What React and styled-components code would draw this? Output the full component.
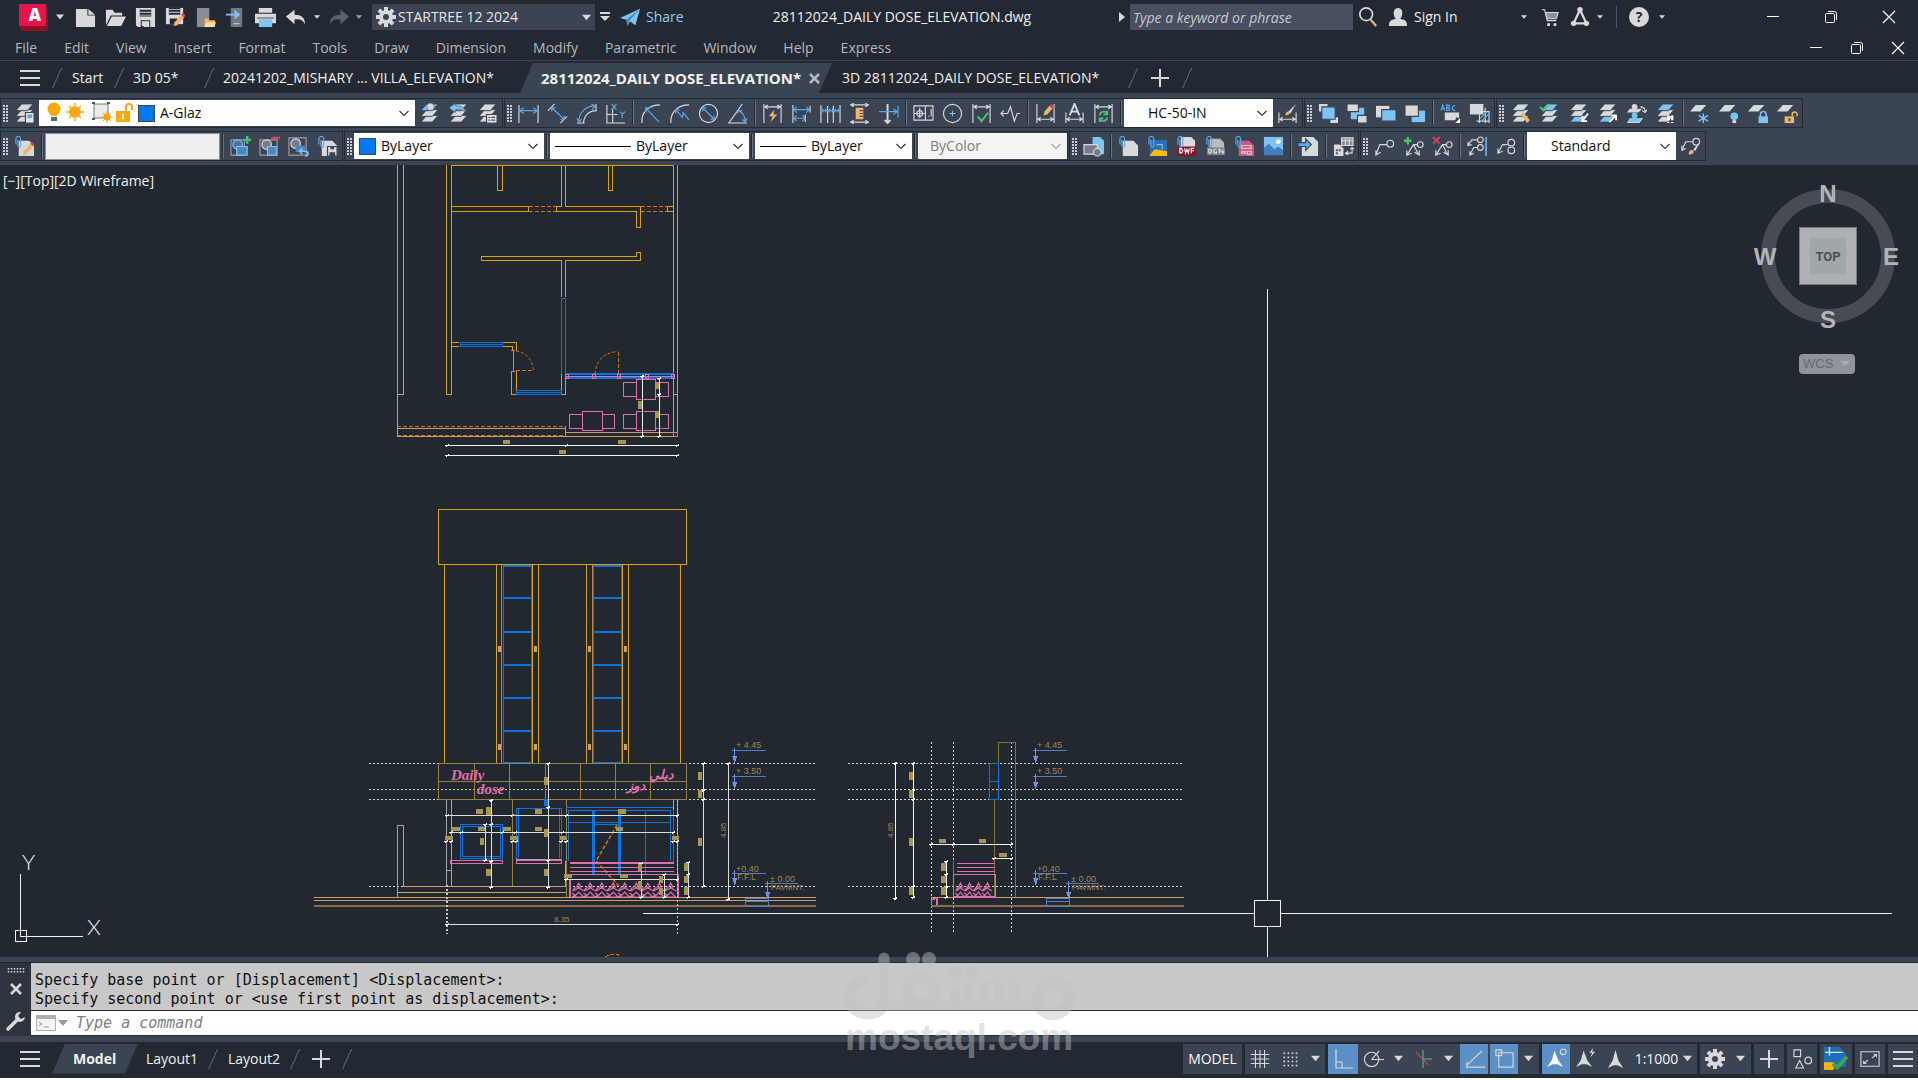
import styled, { createGlobalStyle } from "styled-components";

const INK = "#d9d9d9";
const SKY = "#7cc4f5";
const BLUE = "#5aa9ec";
const AMBER = "#fdb813";
const PEACH = "#f0b36c";
const GREEN = "#4bc46f";
const RED = "#e0405a";

const GlobalStyle = createGlobalStyle`
  * {
    box-sizing: border-box;
  }
  body {
    margin: 0;
    background: #ffffff;
    font-family: "Open Sans", "Noto Sans", sans-serif;
    font-size: 14px;
    line-height: 20px;
    color: #e8e8e8;
  }
  button, input, select {
    font: inherit;
    color: inherit;
    border: 0;
    padding: 0;
    margin: 0;
    background: transparent;
    border-radius: 0;
    outline: 0;
  }
`;

const Shell = styled.div`
  display: flex;
  flex-direction: column;
  height: 100vh;
  padding-bottom: 2px;
  overflow: hidden;
`;

const TitleBar = styled.header`
  display: flex;
  align-items: center;
  height: 34px;
  background: #222933;
`;

const Cell = styled.button`
  display: flex;
  align-items: center;
  justify-content: center;
  flex: none;
  width: ${(p) => p.$w || 30}px;
  height: 30px;
`;

const LogoButton = styled(Cell)`
  margin-left: 18px;
  width: 32px;
`;

const BurgerButton = styled(Cell)`
  width: 44px;
  margin-left: 8px;
`;

const Workspace = styled.label`
  display: flex;
  align-items: center;
  width: 223px;
  height: 26px;
  margin: 0 0 0 8px;
  padding: 0 4px;
  gap: 2px;
  background: #3b4453;
`;

const PlainSelect = styled.select`
  flex: 1;
  min-width: 0;
  height: 100%;
  appearance: none;
`;

const LinkButton = styled.button`
  display: flex;
  align-items: center;
  gap: 6px;
  width: ${(p) => p.$w || 70}px;
  padding-left: 5px;
  color: ${(p) => p.$color || "#f0f0f0"};
`;

const FileTitle = styled.h1`
  flex: 1;
  margin: 0;
  font-size: 14px;
  font-weight: 400;
  text-align: center;
  white-space: nowrap;
  color: #f0f0f0;
`;

const SearchBox = styled.input`
  width: 223px;
  height: 26px;
  margin-left: 5px;
  padding: 0 3px;
  background: #474f61;
  &::placeholder {
    color: #c6c9ce;
    font-style: italic;
    opacity: 1;
  }
`;

const Rule = styled.span`
  width: 1px;
  height: 22px;
  margin: 0 9px;
  background: #4a5467;
`;

const WindowButtons = styled.div`
  display: flex;
  margin-left: ${(p) => p.$gap || "auto"};
`;

const MenuBar = styled.nav`
  display: flex;
  align-items: center;
  height: 27px;
  padding: 2px 0 0 15px;
  gap: 27px;
  border-bottom: 1px solid #3b4453;
  background: #222933;
`;

const MenuItem = styled.button`
  color: #b4b7bb;
`;

const TabStrip = styled.div`
  display: flex;
  align-items: center;
  height: 32px;
  padding-top: 2px;
  background: #222933;
`;

const Tab = styled.button`
  height: 30px;
  width: ${(p) => p.$w}px;
  padding-left: ${(p) => p.$pad || 11}px;
  text-align: left;
  white-space: nowrap;
  color: #f0f0f0;
`;

const ActiveTab = styled(Tab)`
  display: flex;
  align-items: center;
  gap: 8px;
  font-size: ${(p) => p.$size || 14}px;
  font-weight: 700;
  background: #3b4453;
  clip-path: polygon(13px 0, 100% 0, calc(100% - 13px) 100%, 0 100%);
`;

const Slash = styled.span`
  flex: none;
  width: 10px;
  height: 20px;
  background: linear-gradient(114deg, transparent 46%, #4a5467 47%, #4a5467 54%, transparent 55%);
`;

const Toolbars = styled.div`
  display: flex;
  flex-direction: column;
  gap: 3px;
  padding: 5px 0 4px;
  background: #3b4453;
`;

const ToolRow = styled.div`
  display: flex;
  gap: 1px;
`;

const Group = styled.div`
  display: flex;
  align-items: center;
  height: 30px;
  border: 1px solid #222933;
`;

const Grip = styled.span`
  width: 5px;
  height: 17px;
  margin: 0 2px;
  background: radial-gradient(circle at 1px 1px, #c8ccd2 0 1px, transparent 1px) 0 0 / 3px 3px;
`;

const Tool = styled.button`
  display: flex;
  align-items: center;
  justify-content: center;
  width: 29px;
  height: 28px;
`;

const Divider = styled.span`
  width: 2px;
  height: 24px;
  margin: 0 2px;
  background: #222933;
  border-right: 1px solid #6d7582;
`;

const Combo = styled.label`
  display: flex;
  align-items: center;
  gap: 5px;
  width: ${(p) => p.$w}px;
  height: ${(p) => p.$h || 26}px;
  padding: 0 6px 0 ${(p) => p.$pad || 5}px;
  background: ${(p) => (p.$off ? "#f4f4f4" : "#ffffff")};
  color: ${(p) => (p.$off ? "#7d7d7d" : "#101010")};
`;

const Swatch = styled.span`
  width: 17px;
  height: 17px;
  background: #0078f0;
  border: 1px solid #445;
`;

const LineSample = styled.span`
  width: ${(p) => p.$w}px;
  height: 1px;
  background: #000000;
`;

const StyleName = styled.input`
  width: 175px;
  height: 27px;
  background: #efefef;
  border: 1px solid #8b919b;
`;

const Viewport = styled.main`
  position: relative;
  flex: 1;
  min-height: 0;
  overflow: hidden;
  background: #222830;
`;

const Drawing = styled.svg`
  display: block;
`;

const ViewLabel = styled.div`
  position: absolute;
  left: 3px;
  top: 6px;
  color: #f0f0f0;
`;

const Cube = styled.svg`
  position: absolute;
  right: 18px;
  top: 14px;
`;

const CommandDock = styled.section`
  position: relative;
  display: flex;
  height: 85px;
  padding: 5px 0 6px;
  background: #3b4453;
`;

const DockSide = styled.div`
  display: flex;
  flex-direction: column;
  align-items: center;
  gap: 6px;
  width: 31px;
  padding-top: 5px;
  background: #2d3440;
  border-top: 1px solid #222933;
  > button:last-child {
    margin-top: 5px;
  }
`;

const DockMain = styled.div`
  flex: 1;
  display: flex;
  flex-direction: column;
  border: 1px solid #222933;
  border-width: 1px 0;
  font-family: "DejaVu Sans Mono", monospace;
  font-size: 15px;
`;

const History = styled.div`
  height: 48px;
  padding: 8px 4px 0;
  background: #c8c8c8;
  color: #101010;
  line-height: 19px;
  border-bottom: 1px solid #222933;
  > p {
    margin: 0;
  }
`;

const Prompt = styled.label`
  flex: 1;
  display: flex;
  align-items: center;
  gap: 2px;
  padding-left: 5px;
  background: #ffffff;
  > input {
    flex: 1;
    padding-left: 6px;
    color: #222;
  }
  > input::placeholder {
    color: #7b807f;
    font-style: italic;
    opacity: 1;
  }
`;

const Watermark = styled.svg`
  position: absolute;
  left: 44%;
  top: -5px;
  z-index: 2;
  opacity: 0.45;
  pointer-events: none;
`;

const StatusBar = styled.footer`
  display: flex;
  align-items: center;
  height: 36px;
  padding-bottom: 3px;
  background: #222933;
`;

const StatusGroup = styled.div`
  display: flex;
  height: 30px;
  margin-right: 3px;
  background: #3b4453;
  &:last-child {
    margin-right: 0;
  }
`;

const StatusButton = styled.button`
  display: flex;
  align-items: center;
  justify-content: center;
  gap: 5px;
  width: ${(p) => p.$w || 30}px;
  height: 30px;
  margin-right: ${(p) => p.$mr || 0}px;
  background: ${(p) => (p.$on ? "#5b8fc7" : "transparent")};
  color: #f5f5f5;
`;

const Push = styled.span`
  margin-left: auto;
`;

const Svg = ({ size = 22, children }) => (
  <svg width={size} height={size} viewBox="0 0 22 22" fill="none" stroke={INK} strokeWidth="1.2">
    {children}
  </svg>
);

const Caret = ({ c = INK, w = 8 }) => (
  <svg width={w} height={w} viewBox="0 0 10 10">
    <path d="M0 2h10L5 8z" fill={c} />
  </svg>
);

const Chevron = ({ c = "#333" }) => (
  <svg width="10" height="10" viewBox="0 0 10 10" fill="none" stroke={c} strokeWidth="1.1">
    <path d="M0.5 3L5 7.500L9.500 3" />
  </svg>
);

const Burger = () => (
  <svg width="20" height="18" viewBox="0 0 20 18" fill={INK}>
    <path d="M0 1h20v2H0zM0 8h20v2H0zM0 15h20v2H0z" />
  </svg>
);

const Plus = () => (
  <svg width="18" height="18" viewBox="0 0 18 18" fill={INK}>
    <path d="M8 0h2v8h8v2h-8v8H8v-8H0V8h8z" />
  </svg>
);

const Gear = ({ size = 20 }) => (
  <svg width={size} height={size} viewBox="0 0 20 20">
    <g fill={INK}>
      {[0, 45, 90, 135].map((a) => (
        <rect key={a} x="8" y="0" width="4" height="20" transform={`rotate(${a} 10 10)`} />
      ))}
      <circle cx="10" cy="10" r="7" />
    </g>
    <circle cx="10" cy="10" r="3" fill="#3b4453" />
  </svg>
);

// three stacked sheets, tops lets a tool tint single layers
const Stack = ({ tops = [INK, INK, INK] }) => (
  <g stroke="none">
    {[13, 7, 1].map((y, i) => (
      <path key={y} d={`M8 ${y}h12l-6 7H2z`} fill={tops[2 - i]} stroke="#3b4453" strokeWidth="1" />
    ))}
  </g>
);

const Clip = () => <path d="M2 9V3a2.500 2.500 0 0 1 5 0v7a1.500 1.500 0 0 1-3 0V4" stroke={BLUE} />;
const Page = ({ c = INK }) => <path d="M5 5h11l5 5v11H5z" fill={c} stroke="none" />;
const Sheet = ({ x = 0, c = INK }) => <path d={`M${x} 9L${x + 6} 2h11l-6 7z`} fill={c} stroke="none" />;
const Pencil = () => (
  <g stroke="none">
    <path d="M10 16l7-8 3 3-7 8-4 1z" fill={PEACH} />
    <path d="M17 8l1.500-2 3 3L20 11z" fill={RED} />
  </g>
);
const Brush = () => (
  <g stroke="none">
    <path d="M9 19c0-4 3-5 5-4 1 3-1 5-5 4z" fill={PEACH} />
    <path d="M14 14l7-8-5 10z" fill={INK} />
  </g>
);
const DimBar = ({ y = 4 }) => <path d={`M2 1v20M20 1v20M3 ${y}h16M6 ${y - 2}l-3 2 3 2M16 ${y - 2}l3 2-3 2`} />;

const icons = {
  newFile: <path d="M1 2h12v7h8v12H1zM14 2l7 6h-7z" fill={INK} stroke="none" />,
  open: <path d="M1 19V3h7l2 3h8v3H6zM2 20L7 10h15l-5 10z" fill={INK} stroke="none" />,
  save: (
    <g stroke="none">
      <path d="M1 1h20v20H3l-2-2z" fill={INK} />
      <path d="M5 1h12v9H5zM6 14h10v7H6z" fill="#222933" />
      <path d="M5 1h12v2H5zM5 5h12v1H5zM5 8h12v1H5zM7 15h2v5H7zM9 15h6v6H9z" fill={INK} />
    </g>
  ),
  saveAs: (
    <g stroke="none">
      <path d="M1 1h18v17H1z" fill={INK} />
      <path d="M4 1h12v7H4zM5 12h8v6H5z" fill="#222933" />
      <path d="M4 2h12v1H4zM4 5h12v1H4z" fill={INK} />
      <Pencil />
    </g>
  ),
  openMobile: (
    <g stroke="none">
      <path d="M2 1h13v20H2z" fill="#8a8d92" />
      <path d="M10 12h4l1 2h6v7H10z" fill={PEACH} />
      <path d="M12 16h10l-2 5H10z" fill="#ffdca8" />
    </g>
  ),
  saveMobile: (
    <g stroke="none">
      <path d="M6 1h12v20H6z" fill="#74777d" />
      <path d="M1 7h9V3l6 5-6 5V9H1z" fill={SKY} />
      <path d="M9 17h6v1H9z" fill={INK} />
    </g>
  ),
  print: (
    <g stroke="none">
      <path d="M4 1h14v5H4zM0 7h22v10H0z" fill={INK} />
      <path d="M4 13h14v8H4z" fill={SKY} />
      <path d="M2 11h18v1H2z" fill="#444b57" />
    </g>
  ),
  undo: <path d="M10 3v5c7 0 11 3 11 10-2-4-5-6-11-5v5L1 10z" fill={INK} stroke="none" />,
  redo: <path d="M12 3v5C5 8 1 11 1 18c2-4 5-6 11-5v5l9-8z" fill="#5c616a" stroke="none" />,
  plane: (
    <g stroke="none">
      <path d="M0 12L22 2l-5 18-6-4-3 5-1-7z" fill={SKY} />
      <path d="M7 14L22 2 10 15l-2 6z" fill="#3b86c4" />
    </g>
  ),
  search: (
    <>
      <circle cx="9" cy="8" r="7" strokeWidth="1.800" />
      <path d="M14 14l6 7" stroke={PEACH} strokeWidth="2.500" />
    </>
  ),
  person: <path d="M11 1c7 0 5 11 2 12 4 1 8 1 8 8H1c0-7 4-7 8-8C6 12 4 1 11 1z" fill={INK} stroke="none" />,
  cart: (
    <>
      <path d="M2 3h3l3 12h10" />
      <path d="M6 6h14l-2 7H8z" fill="#8d9198" />
      <path d="M8 18h3v3H8zM15 18h3v3h-3z" fill={INK} stroke="none" />
    </>
  ),
  app: (
    <>
      <path d="M11 3L4 18h14z" strokeWidth="2.500" strokeLinejoin="round" />
      <g fill={INK} stroke="none">
        <circle cx="11" cy="3" r="3" />
        <circle cx="4" cy="18" r="3" />
        <circle cx="18" cy="18" r="3" />
      </g>
    </>
  ),
  layerProps: (
    <>
      <Stack />
      <path d="M12 10h9v11h-9z" fill="#e8e8e8" stroke="#3b4453" />
      <path d="M14 12h5v4h-5z" fill={BLUE} stroke="none" />
    </>
  ),
  makeCurrent: (
    <>
      <Stack tops={[SKY, INK, INK]} />
      <circle cx="12" cy="4" r="4" fill={INK} stroke="#3b4453" strokeWidth="0.600" />
    </>
  ),
  layerPrev: (
    <>
      <Stack />
      <path d="M8 0v3c7 0 10 2 10 7-3-4-6-4-10-3v3L1 5z" fill={SKY} stroke="#3b4453" strokeWidth="0.600" />
    </>
  ),
  layerStates: (
    <>
      <Stack />
      <path d="M10 12h11v9H10z" fill="#e8e8e8" stroke="#3b4453" />
      <path d="M12 15h2m1 0h4M12 18h2m1 0h4" stroke="#444" />
    </>
  ),
  linear: (
    <>
      <path d="M1 2v19M21 2v19" />
      <path d="M2 8h18M6 5L2 8l4 3M16 5l4 3-4 3" stroke={BLUE} />
    </>
  ),
  aligned: (
    <>
      <path d="M1 8L8 1M14 21l7-7" />
      <path d="M5 5l13 12M5 9V5h4M18 13v4h-4" stroke={BLUE} />
    </>
  ),
  arcLen: (
    <>
      <path d="M8 21C8 14 13 8 21 8M1 21h8M21 1v8" />
      <path d="M3 20C3 10 10 3 20 3M16 1l4 2-3 4M1 16l2 4 3-3" stroke={BLUE} />
    </>
  ),
  ordinate: (
    <>
      <path d="M2 2v19h19M2 12h11M8 6v15" />
      <path d="M7 1l5 6M12 1L7 7M16 9l2 3 3-3M18 12v4" stroke={BLUE} />
    </>
  ),
  radius: (
    <>
      <path d="M2 21C1 10 9 2 21 2" />
      <path d="M6 5l14 15M6 10V5h5" stroke={BLUE} />
    </>
  ),
  jogged: (
    <>
      <path d="M2 21C1 10 9 2 21 2" />
      <path d="M7 7l7 8 1-5 6 8M7 11V7h4" stroke={BLUE} />
    </>
  ),
  diameter: (
    <>
      <circle cx="11" cy="11" r="9.500" />
      <path d="M5 5l12 12M5 9V5h4M17 13v4h-4" stroke={BLUE} />
    </>
  ),
  angular: (
    <>
      <path d="M16 1L2 21h19" />
      <path d="M12 8c5 2 7 7 7 12M11 11l1-3 4 0M16 17l3 3 2-4" stroke={BLUE} />
    </>
  ),
  quickDim: (
    <>
      <DimBar />
      <path d="M13 7l-6 7h4l-2 6 7-8h-4z" fill={PEACH} stroke="none" />
    </>
  ),
  baseline: (
    <>
      <path d="M2 2v19M20 3v7M15 12v8" />
      <path d="M3 7h17M3 16h12M6 4L3 7l3 3M16 4l3 3-3 3M6 13l-3 3 3 3M12 13l3 3-3 3" stroke={BLUE} />
    </>
  ),
  continueDim: (
    <>
      <path d="M1 2v19M8 3v18M14 3v18M21 2v19" />
      <path d="M1 8h20M3 6v4M6 6v4M10 6v4M13 6v4M16 6v4M19 6v4" stroke={BLUE} />
    </>
  ),
  space: (
    <>
      <path d="M1 2h20M1 20h20M5 0L2 2l3 2M17 0l3 2-3 2M5 18l-3 2 3 2M17 18l3 2-3 2" />
      <path d="M7 5h8v12H7z" fill={PEACH} stroke="none" />
      <path d="M11 8h4M11 11h4M11 14h4" stroke="#555" />
    </>
  ),
  breakDim: (
    <>
      <path d="M10 1v20M7 18l3 3 3-3" strokeWidth="2" />
      <path d="M1 9h19M16 6l4 3-4 3M21 3v12" stroke={BLUE} />
    </>
  ),
  tolerance: (
    <>
      <path d="M1 3h20v15H1zM13 3v15M1 11h12M7 5v11M16 14h1M19 6v8" />
      <circle cx="7" cy="11" r="3" />
    </>
  ),
  center: (
    <>
      <circle cx="11" cy="11" r="9.500" />
      <path d="M11 8v6M8 11h6" stroke={SKY} />
    </>
  ),
  inspect: (
    <>
      <DimBar />
      <path d="M7 14l4 5 7-9" stroke={GREEN} strokeWidth="2" />
    </>
  ),
  jogLine: <path d="M1 11h7l3-7 4 15 3-8h3M4 8l-3 3 3 3" />,
  dimEdit: (
    <>
      <DimBar y={17} />
      <path d="M9 13l1-4 6-7 3 3-6 7z" fill={PEACH} stroke="none" />
      <path d="M15 3l2-2 3 3-2 2z" fill={RED} stroke="none" />
    </>
  ),
  dimText: (
    <>
      <path d="M2 10v11M20 10v11M3 17h16M6 15l-3 2 3 2M16 15l3 2-3 2" />
      <path d="M6 13l5-12 5 12M8 9h6" strokeWidth="2" />
    </>
  ),
  dimUpdate: (
    <>
      <DimBar />
      <path d="M7 13c1-5 7-5 8-1M15 15c-1 5-7 5-8 1M15 8v4h-4M7 20v-4h4" stroke={GREEN} strokeWidth="1.800" />
    </>
  ),
  dimStyle: (
    <>
      <path d="M2 10v11M20 10v11M3 17h16M6 15l-3 2 3 2M16 15l3 2-3 2" />
      <path d="M9 13c0-4 2-4 4-4 1 3-1 4-4 4z" fill={PEACH} stroke="none" />
      <path d="M12 9l8-8-6 10z" fill={INK} stroke="none" />
    </>
  ),
  front: (
    <g stroke="none">
      <path d="M1 1h9v8H1zM13 15h8v6h-8z" fill={INK} />
      <path d="M4 4h14v13H4z" fill={SKY} stroke="#3b4453" />
    </g>
  ),
  back: (
    <g stroke="none">
      <path d="M4 5h14v12H4z" fill={SKY} />
      <path d="M0 1h12v8H0zM11 13h10v8H11z" fill={INK} stroke="#3b4453" />
    </g>
  ),
  above: (
    <g stroke="none">
      <path d="M0 3h14v12H0z" fill={INK} />
      <path d="M6 7h15v12H6z" fill={SKY} stroke="#3b4453" />
    </g>
  ),
  under: (
    <g stroke="none">
      <path d="M7 8h14v12H7z" fill={SKY} />
      <path d="M0 2h14v12H0z" fill={INK} stroke="#3b4453" />
    </g>
  ),
  textFront: (
    <>
      <path d="M1 8l2-6 2 6M2 6h3M7 8V2c5 0 3 3 0 3 5 0 4 3 0 3M16 3c-4-1-4 5 0 5" stroke={BLUE} />
      <path d="M5 10h15v6l-3-1-1 3H5z" fill={INK} stroke="none" />
      <path d="M21 21v-5l-5 5z" fill="#fff" stroke="none" />
    </>
  ),
  hatchBack: (
    <>
      <path d="M11 21V9h10v12M8 19h13M17 5v16" />
      <path d="M12 16l7-7M12 20l9-9" stroke={BLUE} />
      <path d="M1 1h14v11H1z" fill={INK} stroke="none" />
    </>
  ),
  layerMatch: (
    <>
      <Stack />
      <path d="M11 12l3-2 7 8-3 3z" fill={PEACH} stroke="none" />
    </>
  ),
  layerCheck: (
    <>
      <Stack tops={[SKY, INK, INK]} />
      <path d="M1 4l4 4 5-7" stroke={GREEN} strokeWidth="2" />
    </>
  ),
  layerDown: (
    <>
      <Stack tops={[INK, INK, SKY]} />
      <path d="M21 11l-6 8M15 14v5h5" strokeWidth="1.800" stroke="#fff" />
    </>
  ),
  layerUp: (
    <>
      <Stack tops={[INK, INK, SKY]} />
      <path d="M13 20l7-7M15 13h5v5" strokeWidth="1.800" stroke="#fff" />
    </>
  ),
  layerUser: (
    <g stroke="none">
      <path d="M4 6h13l-4 4H1zM4 16h14l-4 5H1z" fill={INK} />
      <circle cx="9" cy="4" r="3" fill={INK} />
      <circle cx="9" cy="13" r="3" fill={SKY} />
      <path d="M5 16h12l-4 4H2z" fill={SKY} />
      <path d="M15 4c4 0 5 2 5 5M17 8l3 2 2-3" fill="none" stroke={INK} />
    </g>
  ),
  layerWalk: (
    <>
      <Stack tops={[SKY, INK, INK]} />
      <path d="M14 13v5M18 13v5M14 20v1M18 20v1" stroke="#fff" strokeWidth="2.500" />
    </>
  ),
  freeze: (
    <>
      <Sheet />
      <path d="M14 11v10M9 13l10 6M19 13L9 19" stroke={SKY} strokeWidth="1.500" />
    </>
  ),
  layerOff: (
    <>
      <Sheet />
      <circle cx="16" cy="14" r="4" fill={SKY} stroke="none" />
      <path d="M14 18h4v3h-4z" fill={INK} stroke="none" />
    </>
  ),
  lock: (
    <>
      <Sheet />
      <path d="M13 15v-3a3 3 0 0 1 6 0v3" stroke={SKY} strokeWidth="1.600" />
      <path d="M11 14h10v7H11z" fill={SKY} stroke="none" />
    </>
  ),
  unlock: (
    <>
      <Sheet />
      <path d="M16 14v-2a2.500 2.500 0 0 1 5 0v2" stroke={PEACH} strokeWidth="1.600" />
      <path d="M8 14h10v7H8z" fill={PEACH} stroke="none" />
      <path d="M12 16h2v3h-2z" fill="#3b4453" stroke="none" />
    </>
  ),
  refEdit: (
    <>
      <Page />
      <Clip />
      <Pencil />
    </>
  ),
  addSet: (
    <>
      <path d="M1 4h14v16H1z" stroke="#9aa0a8" />
      <circle cx="8" cy="9" r="5" fill="#4b76a0" stroke={SKY} />
      <path d="M7 11h11v9H7z" fill="#4b86bd" stroke={SKY} />
      <path d="M18 0v8M14 4h8" stroke={GREEN} strokeWidth="2.500" />
    </>
  ),
  removeSet: (
    <>
      <path d="M1 4h18v16H1z" stroke="#9aa0a8" />
      <circle cx="8" cy="9" r="5" fill="#787e87" />
      <path d="M9 11h9v9H9z" fill="#4b86bd" stroke={SKY} />
      <path d="M13 2h9" stroke={RED} strokeWidth="2.500" />
    </>
  ),
  discard: (
    <>
      <path d="M1 2h18v18H1z" stroke="#9aa0a8" />
      <circle cx="8" cy="8" r="5" fill="#787e87" />
      <path d="M8 10h10v7H8z" fill="#4b86bd" stroke="none" />
      <path d="M13 16h5c4 0 4 5 0 5M15 13l-3 3 3 3" stroke={SKY} strokeWidth="1.600" />
    </>
  ),
  saveRef: (
    <>
      <Page />
      <Clip />
      <path d="M11 11h10v10H11z" fill={INK} stroke="#3b4453" />
      <path d="M14 11h4v3h-4zM13 17h6v4h-6z" fill="#3b4453" stroke="none" />
    </>
  ),
  insertBlock: (
    <g stroke="none">
      <path d="M10 1h8l4 4v14H10z" fill={SKY} />
      <path d="M1 9h14v10H1z" fill="#777d86" stroke={INK} />
      <circle cx="15" cy="17" r="4" fill="#777d86" stroke={INK} />
    </g>
  ),
  attach: (
    <>
      <Page />
      <Clip />
    </>
  ),
  attachDwg: (
    <>
      <path d="M3 4h18v17H3z" fill="#2a6fb5" stroke="none" />
      <path d="M3 20l5-6 13 2v5H3z" fill={AMBER} stroke="none" />
      <path d="M10 9h6v5" stroke={SKY} />
      <Clip />
    </>
  ),
  attachDwf: (
    <>
      <path d="M5 1h11l4 4v8H5z" fill={INK} stroke="none" />
      <path d="M1 11h20v10H1z" fill="#8c1024" stroke="none" />
      <path d="M4 18v-5c4 0 4 5 0 5M9 13l1 5 1.500-4 1.500 4 1-5M16 18v-5h3M16 15.500h3" stroke="#fff" />
      <Clip />
    </>
  ),
  attachDgn: (
    <>
      <path d="M5 3h11l4 4v6H5z" fill="#b8bbc0" stroke="none" />
      <path d="M2 12h19v8H2z" fill="#7e8288" stroke="none" />
      <path d="M4 18v-4c4 0 4 4 0 4M12 14c-4-1-4 4 0 4v-2M15 18v-4l4 4v-4" />
      <Clip />
    </>
  ),
  attachPdf: (
    <>
      <Page c="#c85a80" />
      <path d="M8 10h10v3H8zM8 16h4v2H8zM14 16h4v3h-4z" stroke="#f3c3d2" />
      <Clip />
    </>
  ),
  image: (
    <g stroke="none">
      <path d="M1 1h20v19H1z" fill={SKY} />
      <path d="M1 20V12l5-4 6 6 4-3 5 4v5z" fill="#3f80bd" />
      <circle cx="16" cy="6" r="2.500" fill="#fdf0b0" />
    </g>
  ),
  importFile: (
    <g stroke="none">
      <path d="M4 1h12l5 5v15H4z" fill={INK} />
      <path d="M0 7h8V3l6 6-6 6v-4H0z" fill={BLUE} stroke="#3b4453" />
    </g>
  ),
  dataLink: (
    <>
      <path d="M9 2h12v8H9zM9 5h12M13 2v8M17 2v8" fill="#888d94" />
      <path d="M1 9h6l4 4v8H1z" fill={INK} stroke="none" />
      <path d="M3 14h2v2H3zM6 14h2v2H6zM3 17h2v2H3z" fill="#555" stroke="none" />
      <path d="M14 18h6v-5M16 16l-3 2 3 2M18 14l2-2 2 2" />
    </>
  ),
  leader: (
    <>
      <path d="M2 20l4-11h8M2 15v5l5-3" />
      <circle cx="17" cy="8" r="3.500" />
    </>
  ),
  leaderAdd: (
    <>
      <path d="M4 20l7-11h4M11 9l5 10M4 15v5l5-2M12 17l5 3 0-5" />
      <circle cx="18" cy="9" r="3" />
      <path d="M5 1v8M1 5h8" stroke={GREEN} strokeWidth="2.500" />
    </>
  ),
  leaderRemove: (
    <>
      <path d="M4 20l7-11h4M11 9l5 10M4 15v5l5-2M12 17l5 3 0-5" />
      <circle cx="18" cy="9" r="3" />
      <path d="M1 1l7 7M8 1L1 8" stroke={RED} strokeWidth="2" />
    </>
  ),
  leaderAlign: (
    <>
      <path d="M1 10l4-6h6M3 20l4-8h4M1 6v4l4-1M3 16v4l4-2" />
      <circle cx="14" cy="4" r="3" />
      <circle cx="14" cy="12" r="3" />
      <path d="M20 1v20" stroke={BLUE} strokeWidth="2" />
    </>
  ),
  leaderCollect: (
    <>
      <path d="M2 18l5-9h5M2 13v5l5-2" />
      <circle cx="16" cy="7" r="3.500" />
      <circle cx="16" cy="15" r="3.500" />
    </>
  ),
  leaderStyle: (
    <>
      <path d="M2 15l4-9h8M2 10v5l4-2" />
      <circle cx="17" cy="6" r="3.500" />
      <Brush />
    </>
  ),
  grid: <path d="M6 1v20M11 1v20M16 1v20M1 6h20M1 11h20M1 16h20" />,
  snap: (
    <g fill={INK} stroke="none">
      {[3, 8, 13, 18].map((x) =>
        [4, 9, 14, 19].map((y) => <rect key={`${x}-${y}`} x={x} y={y - 1} width="2" height="2" />)
      )}
    </g>
  ),
  ortho: <path d="M4 1v19h17M4 14h6v6" />,
  polar: (
    <>
      <circle cx="9" cy="12" r="7.500" />
      <path d="M9 12h13M9 12l8-9" />
    </>
  ),
  iso: (
    <>
      <path d="M11 1v20M11 11h10" stroke={GREEN} />
      <path d="M3 3l14 15" stroke={RED} />
    </>
  ),
  track: <path d="M2 20h20M3 18L19 3M3 15v5" />,
  osnap: <path d="M5 5h15v15H5zM2 2h6v6H2z" />,
  anno: (
    <>
      <path d="M9 3l4 10 5 7-6-3H7l-6 3 5-7z" fill="#fff" stroke="none" />
      <circle cx="18" cy="4" r="3" />
    </>
  ),
  annoAuto: (
    <>
      <path d="M9 3l4 10 5 7-6-3H7l-6 3 5-7z" fill={INK} stroke="none" />
      <path d="M19 0l-4 5h3l-2 5 5-6h-3z" fill={INK} stroke="none" />
    </>
  ),
  annoScale: <path d="M11 2l3 11 5 8-6-3H9l-6 3 5-8z" fill={INK} stroke="none" />,
  isolate: (
    <>
      <path d="M2 2h7v7H2zM8 13l4 8H4z" />
      <circle cx="17" cy="13" r="3.500" />
    </>
  ),
  hardware: (
    <g stroke="none">
      <path d="M0 0h14l6 6v12H0z" fill="#1f6fb8" />
      <path d="M0 14h9v7H0z" fill={AMBER} />
      <path d="M5 0v8M1 5h16" stroke="#cfe6fa" />
      <path d="M8 15l4 4 9-10" fill="none" stroke="#3aa55d" strokeWidth="3.500" />
    </g>
  ),
  clean: <path d="M1 3h20v16H1zM13 10l5-4M15 6h3v3M9 12l-5 4M4 13v3h3" />,
};

const ToolButton = ({ name }) => (
  <Tool aria-label={name}>
    <Svg size={21}>{icons[name]}</Svg>
  </Tool>
);

// "|" stands for a divider
const ToolSet = ({ names }) => names.map((n, i) => (n === "|" ? <Divider key={i} /> : <ToolButton key={i} name={n} />));

const Minimize = () => (
  <svg width="14" height="14" viewBox="0 0 14 14" stroke="#fff">
    <path d="M1 6.500h12" />
  </svg>
);
const Restore = () => (
  <svg width="14" height="14" viewBox="0 0 14 14" fill="none" stroke="#fff">
    <path d="M1.500 4.500a1 1 0 0 1 1-1h7a1 1 0 0 1 1 1v7a1 1 0 0 1-1 1h-7a1 1 0 0 1-1-1zM4 1.500h6.500a2 2 0 0 1 2 2V10" />
  </svg>
);
const Close = () => (
  <svg width="14" height="14" viewBox="0 0 14 14" stroke="#fff" strokeWidth="1.200">
    <path d="M1 1l12 12M13 1L1 13" />
  </svg>
);

const Controls = ({ w, gap }) => (
  <WindowButtons $gap={gap}>
    <Cell $w={w} aria-label="Minimize"><Minimize /></Cell>
    <Cell $w={w} aria-label="Restore"><Restore /></Cell>
    <Cell $w={w} aria-label="Close"><Close /></Cell>
  </WindowButtons>
);

/* ---- model space ---- */

const GOLD = "#d9a404";
const OLIVE = "#86733f";
const TAN = "#cf9c66";
const CAD = "#0b74e5";
const PINK = "#e06fae";
const ORANGE = "#d9730d";
const TAGS = "#ab9350";

const Tags = ({ list }) => list.map(([x, y, w, h], i) => <rect key={i} x={x} y={y} width={w} height={h} fill={TAGS} />);

const Ticks = ({ points }) => (
  <path d={points.map(([x, y]) => `M${x - 1} ${y + 2}l3-3M${x - 2} ${y + 0.5}h4`).join("")} stroke="#fff" />
);

const Levels = () => (
  <g fontFamily="Liberation Sans, sans-serif" fontSize="9" fill="#a08550">
    <g stroke="#4f7fc4" fill="none">
      <path d="M732 750.500h34M732 776.500h34M732 873.500h34M765 883.500h33" />
      <path d="M745.500 898.500h23v8h-23zM745 901.500h23" strokeWidth="1.500" />
      <path d="M734.500 748v15M734.500 774v15M734.500 870v15M767.500 881v16" stroke="#6f92f0" />
    </g>
    <g fill="#6f92f0">
      <path d="M732 756h5l-2 7zM732 782h5l-2 7zM732 878h5l-2 8zM765 892h5l-2 7z" />
    </g>
    <text x="736" y="748">+ 4.45</text>
    <text x="736" y="774">+ 3.50</text>
    <text x="736" y="872">+0.40</text>
    <text x="737" y="880">F.F.L</text>
    <text x="770" y="882">± 0.00</text>
    <text x="771" y="890" fontSize="8">PAVMNT.</text>
  </g>
);

// lattice front: small peaks, then a row of bows over a row of triangles
const Planter = ({ x, n, step }) => (
  <path
    d={Array.from({ length: n }, (_, i) => {
      const a = x + i * step;
      const h = step / 2;
      return `M${a + h - 2} 887l2-4 2 4zM${a} 891l${h}-3 ${h} 3M${a} 891q1-4 3-3M${a + 1} 897l${h - 1}-5 ${h - 1} 5zM${a - 1} 893l3 2-3 2`;
    }).join("")}
    stroke={PINK}
    strokeWidth="1.200"
    shapeRendering="auto"
  />
);

const FloorPlan = () => (
  <g>
    <path d="M397.500 165V436.500H677.500V394.500H673.500V436M403.500 165V394.500H397M397 428.500H565.500M565.500 426V436M565 432.500H677" stroke={TAN} />
    <path
      d="M446.500 165V394.500H451.500V165M451 165.500H673M497.500 165V190.500H502.500V165M561.500 165V206.500M565.500 165V206.500M608.500 165V190.500H612.500V165
      M673.500 165V394.500M677.500 165V394.500M451 206.500H528.500V211.500H451M561 206.500H556.500V211.500H636.500V227.500H640.500V206.500H565M673 206.500H667.500V211.500H673
      M561.500 297V260.500H481.500V256.500H636.500V252.500H640.500V260.500H565.500V297M451 342.500H459M451 346.500H459M503 342.500H516.500V351M503 346.500H512.500V350
      M511.500 371V394.500H516.500V371M561.500 374V394.500H565.500V374"
      stroke={GOLD}
    />
    <path d="M561.500 298V374M565.500 298V374M561 298.500h5" stroke={CAD} />
    <path d="M460.500 342.500h42v4h-42zM460 344.500h42M516.500 390.500h45v4h-45zM516 392.500h46" stroke={CAD} strokeWidth="1.500" />
    <path d="M565 374H674M565 378H674" stroke={CAD} strokeWidth="2" />
    <path
      d="M529 206.500h27M529 211.500h27M641 206.500h26M641 211.500h26M516 370.500h18M618.500 352v22M397 426.500H565M397 435H565"
      stroke={ORANGE}
      strokeDasharray="4 2"
    />
    <path d="M516 351Q531 353 533.500 370M595 374Q597 353 618 351.500" stroke={ORANGE} strokeDasharray="3 2" shapeRendering="auto" />
    <path
      d="M513 350V371M511 350h4M511 371h4M566 376H674M565.500 374.500h3v4h-3zM592 374.500h3v4h-3zM617.500 374.500h3v4h-3zM645 374.500h3v4h-3zM671 374.500h3v4h-3z
      M636.500 379.500h19v20h-19zM623.500 382.500h13v14h-13zM655.500 382.500h13v14h-13z
      M582.500 411.500h20v19h-20zM569.500 414.500h13v14h-13zM602.500 414.500h12v14h-12z
      M636.500 411.500h19v19h-19zM623.500 414.500h13v14h-13zM655.500 414.500h13v14h-13zM673.500 432.500h4v4h-4z"
      stroke={PINK}
    />
    <path d="M642.500 375V437M659.500 378V437M446 445.500H678M446 455.500H678" stroke="#f2f2f2" />
    <Ticks points={[[447, 445], [566, 445], [677, 445], [447, 455], [677, 455], [642, 376], [642, 436], [659, 378], [659, 394], [659, 436]]} />
    <Tags list={[[503, 440, 7, 4], [618, 440, 8, 4], [559, 450, 7, 4], [638, 401, 4, 8], [656, 383, 3, 6], [656, 411, 3, 7]]} />
  </g>
);

const Elevation = () => (
  <g>
    <path d="M438.500 509.500h248v55h-248zM444.500 565V763M680.500 565V763M496.500 565V763M532.500 565V763M538.500 565V763M586.500 565V763M622.500 565V763M628.500 565V763" stroke={GOLD} />
    <path d="M501.500 565V763M592 565V763" stroke="#a98b4a" />
    {[503.5, 593.5].map((x) => (
      <g key={x} stroke={CAD}>
        <path d={`M${x} 565V763M${x + 28} 565V763`} />
        <path d={`M${x} 566h28M${x} 598h28M${x} 632h28M${x} 665h28M${x} 698h28M${x} 731h28M${x} 763h28`} strokeWidth="2" />
      </g>
    ))}
    {[498, 534, 588, 624].map((x) => (
      <path key={x} d={`M${x} 646h3v6h-3zM${x} 744h3v6h-3z`} fill={TAN} />
    ))}
    <path d="M369 763.500H816M369 789.500H816M369 799.500H816M369 886.500H816" stroke="#d5d5d5" strokeWidth="1.500" strokeDasharray="2 2" />
    <path d="M438.500 763.500h248v36h-248zM438 781.500h248M474 763v36M509.500 763v36M545 763v36M580 763v36M615.500 763v36M650.500 763v36M512.500 800V886M566.500 800V897" stroke="#9a7f45" />
    <g fill={PINK} fontFamily="Liberation Serif, serif" fontStyle="italic" fontWeight="700" fontSize="15">
      <text x="451" y="780">Daily</text>
      <text x="477" y="794">dose</text>
      <g fontFamily="DejaVu Sans, sans-serif" fontSize="13">
        <text x="649" y="779">ديلي</text>
        <text x="627" y="790">دوز</text>
      </g>
    </g>
    <path d="M397.500 897V825.500H403.500V886.500H566M397 892.500H566M314 897.500H816M314 900.500H816M446.500 886V870.500H451.500V886M565.500 861V887" stroke={TAN} />
    <path d="M314 906H816" stroke="#8f6c48" strokeWidth="2" />
    <path d="M446.500 800V886M451.500 800V870M673.500 799V862M677.500 799V874M516 859h46M516.500 808V859" stroke="#a5a5aa" />
    <path d="M460.500 824.500h42v34h-42zM462.500 826.500h38v30h-38zM516.500 858V808.500H561.500V858M518.500 858V809M559.500 858V809" stroke={CAD} />
    <path d="M566 807.500H673M568.500 861V810.500H670.500V861M568 822.500H671M645.500 812V874M673.500 810V862M595 824.500h23" stroke={CAD} strokeWidth="1.500" />
    <path d="M593.500 810V874M619 810V874" stroke={CAD} strokeWidth="3" />
    <rect x="544" y="799" width="5" height="7" fill={CAD} />
    <path d="M617 825L596 861L620 887" stroke={ORANGE} strokeWidth="1.500" strokeDasharray="4 2" shapeRendering="auto" />
    <path
      d="M450.500 860.500h52v3h-52zM516.500 860.500h45v3h-45zM570 863H674M570 867.500H674M570 871.500H674M566 874.500H678V897M570 879V897"
      stroke={PINK}
      strokeWidth="1.500"
    />
    <Planter x={573} n={9} step={11.5} />
    <path d="M447 885V934M677.500 800V934" stroke="#c8c8c8" strokeWidth="1.500" strokeDasharray="2 2" />
    <path
      d="M447 815.500H677M450 832.500H674M491.500 799V887M485.500 824V861M548.500 763V887M566 879.500H678M641.500 863V898M664.500 874V898M688.500 862V898M703.500 763V887M728.500 763V900M447 924.500H677"
      stroke="#dcdcdc"
    />
    <Ticks
      points={[
        [447, 815], [512, 815], [566, 815], [677, 815], [451, 832], [461, 832], [502, 832], [515, 832], [562, 832], [673, 832],
        [446, 841], [451, 841], [512, 841], [516, 841], [561, 841], [566, 841], [673, 841], [677, 841],
        [491, 800], [491, 824], [491, 861], [491, 887], [485, 824], [485, 860], [548, 763], [548, 807], [548, 860], [548, 887],
        [566, 879], [677, 879], [641, 863], [641, 897], [664, 874], [664, 897], [688, 862], [688, 874], [688, 897],
        [703, 763], [703, 790], [703, 799], [703, 886], [728, 763], [728, 899], [447, 924], [677, 924],
      ]}
    />
    <Tags
      list={[
        [476, 809, 7, 5], [486, 807, 5, 8], [535, 809, 7, 5], [618, 809, 8, 5], [452, 827, 8, 4], [478, 827, 7, 4], [503, 827, 8, 4], [535, 827, 7, 4],
        [616, 827, 7, 4], [445, 836, 8, 4], [510, 836, 8, 4], [560, 836, 7, 4], [672, 836, 7, 4], [480, 838, 4, 7], [544, 777, 4, 8], [544, 829, 4, 8],
        [486, 869, 5, 7], [544, 869, 4, 7], [564, 874, 8, 4], [620, 874, 8, 4], [638, 864, 4, 7], [638, 881, 4, 8], [659, 876, 4, 7], [659, 888, 4, 7],
        [684, 863, 4, 8], [684, 876, 4, 7], [684, 887, 4, 8], [698, 772, 4, 8], [698, 790, 4, 8], [698, 838, 4, 8],
      ]}
    />
    <g fontFamily="Liberation Sans, sans-serif" fontSize="8" fill="#a08550">
      <text x="554" y="922">8.35</text>
      <text transform="translate(726 838) rotate(-90)">4.85</text>
    </g>
    <path d="M605 957l6-3h7v4" stroke={ORANGE} strokeDasharray="4 2" />
    <Levels />
  </g>
);

const Section = () => (
  <g>
    <path d="M848 763.500H1184M848 789.500H1184M848 799.500H1184M848 886.500H1184M931.500 742V934M953.500 742V934M1011.500 742V934" stroke="#d5d5d5" strokeWidth="1.500" strokeDasharray="2 2" />
    <path d="M998.500 763V742.500H1015.500V897M994.500 800V897M953.500 861V897" stroke={OLIVE} />
    <path d="M989.500 763.500h9v36h-9zM989 781.500h10" stroke={CAD} strokeWidth="1.500" />
    <path d="M931 897.500H1184" stroke={TAN} />
    <path d="M931 905.500H1184" stroke="#8f6c48" strokeWidth="2" />
    <path d="M931.500 905V900L937 898V905M957 863.500H995M957 867.500H995M957 871.500H995M953.500 897V874.500H995.500V897M954 897H995" stroke={PINK} strokeWidth="1.500" />
    <Planter x={956} n={4} step={9} />
    <path d="M895.500 762V900M913.500 762V898M931 844.500H1012M994 858.500H1012M946.500 861V898" stroke="#f2f2f2" />
    <Ticks
      points={[
        [895, 763], [895, 898], [913, 763], [913, 790], [913, 799], [913, 886], [913, 897], [931, 844], [953, 844], [1011, 844],
        [994, 858], [1011, 858], [946, 861], [946, 874], [946, 887], [946, 897],
      ]}
    />
    <Tags
      list={[
        [909, 772, 4, 8], [909, 790, 4, 8], [909, 838, 4, 8], [909, 887, 4, 8], [939, 839, 7, 4], [979, 839, 7, 4],
        [999, 853, 8, 4], [941, 863, 5, 8], [941, 876, 5, 7], [941, 887, 5, 8],
      ]}
    />
    <text transform="translate(893 838) rotate(-90)" fontFamily="Liberation Sans, sans-serif" fontSize="8" fill="#a08550">4.85</text>
    <g transform="translate(301 0)">
      <Levels />
    </g>
  </g>
);

const Model = () => (
  <Drawing width="1918" height="792" viewBox="0 165 1918 792" fill="none" shapeRendering="crispEdges">
    <FloorPlan />
    <Elevation />
    <Section />
    <g stroke="#f0f0f0">
      <path d="M643 913.500H1254M1281 913.500H1892M1267.500 289V900M1267.500 927V957M1254.500 900.500h26v26h-26z" />
      <path d="M20.500 874V936.500H83M15.500 930.500h11v11h-11z" />
    </g>
    <g fill="#f0f0f0" fontFamily="Lato, sans-serif" fontSize="22" fontWeight="300">
      <text x="22" y="870">Y</text>
      <text x="87" y="935">X</text>
    </g>
  </Drawing>
);

const ViewCube = () => (
  <Cube width="146" height="200" viewBox="1754 179 146 200">
    <circle cx="1828" cy="256" r="60" fill="none" stroke="#474b53" strokeWidth="14" />
    <rect x="1799.5" y="227.500" width="57" height="57" fill="#aeb0b4" stroke="#77797d" />
    <rect x="1810" y="238" width="36" height="36" fill="#9fa7aa" />
    <g fontFamily="Liberation Sans, sans-serif" fontWeight="700" textAnchor="middle" fill="#b3b5b9">
      <text x="1828" y="202" fontSize="24">N</text>
      <text x="1891" y="265" fontSize="24">E</text>
      <text x="1828" y="328" fontSize="24">S</text>
      <text x="1765" y="265" fontSize="24">W</text>
      <text x="1828" y="261" fontSize="13" fontFamily="Roboto, sans-serif" fill="#4c5054">TOP</text>
    </g>
    <rect x="1799" y="354" width="56" height="20" rx="4" fill="#8f929a" />
    <text x="1803" y="368" fontSize="13" fontFamily="Liberation Sans, sans-serif" fill="#666970">WCS</text>
    <path d="M1840 361h10l-5 5z" fill="#a9acb3" />
  </Cube>
);

const Mark = () => (
  <Watermark width="232" height="110" viewBox="843 952 232 110" fill="none" stroke="#c3c3c3">
    <path d="M883 958V1000Q883 1014 866 1014Q849 1012 849 997Q849 985 861 981" strokeWidth="11" strokeLinecap="round" />
    <path d="M883 1006H1040M954 1005V987M967 1005V985M983 1005V981M998 1005V981M1013 1005V981" strokeWidth="10" />
    <circle cx="920" cy="991" r="14" strokeWidth="11" />
    <circle cx="1052" cy="998" r="16" strokeWidth="12" />
    <g fill="#c3c3c3" stroke="none">
      <circle cx="912" cy="959" r="7" />
      <circle cx="928" cy="959" r="7" />
      <circle cx="954" cy="973" r="7" />
      <circle cx="970" cy="973" r="7" />
      <text x="844" y="1050" fontFamily="Liberation Sans, sans-serif" fontWeight="700" fontSize="37">mostaql.com</text>
    </g>
  </Watermark>
);

const menus = ["File", "Edit", "View", "Insert", "Format", "Tools", "Draw", "Dimension", "Modify", "Parametric", "Window", "Help", "Express"];
const dimTools = [
  "linear", "aligned", "arcLen", "ordinate", "|", "radius", "jogged", "diameter", "angular", "|",
  "quickDim", "baseline", "continueDim", "space", "breakDim", "|", "tolerance", "center", "inspect", "jogLine", "|",
  "dimEdit", "dimText", "dimUpdate", "|",
];

const Icon = ({ n, size }) => <Svg size={size}>{icons[n]}</Svg>;

export default function App() {
  return (
    <Shell>
      <GlobalStyle />
      <TitleBar>
        <LogoButton aria-label="Application menu">
          <svg width="30" height="27" viewBox="0 0 30 27">
            <path d="M0 0h26l3 4v23H3l-3-4z" fill="#8c1024" />
            <path d="M0 0h27v22H0z" fill="#e3154b" />
            <text x="16" y="17" textAnchor="middle" fontFamily="Open Sans, sans-serif" fontWeight="800" fontSize="17" fill="#fff">A</text>
          </svg>
        </LogoButton>
        <Cell $w={20} aria-label="Menu"><Caret /></Cell>
        {["newFile", "open", "save", "saveAs", "openMobile", "saveMobile", "print", "undo"].map((n) => (
          <Cell key={n} aria-label={n}><Icon n={n} size={21} /></Cell>
        ))}
        <Cell $w={14} aria-label="Undo list"><Caret w={6} /></Cell>
        <Cell aria-label="redo"><Icon n="redo" size={21} /></Cell>
        <Cell $w={10} aria-label="Redo list"><Caret w={6} c="#a0a4aa" /></Cell>
        <Workspace>
          <Gear />
          <PlainSelect aria-label="Workspace"><option>STARTREE 12 2024</option></PlainSelect>
          <Caret w={9} />
        </Workspace>
        <Cell $w={20} aria-label="Customize">
          <svg width="10" height="10" viewBox="0 0 10 10" fill={INK}><path d="M0 0h10v2H0zM0 4h10L5 9z" /></svg>
        </Cell>
        <LinkButton $color="#8fccf5"><Icon n="plane" size={20} />Share</LinkButton>
        <FileTitle>28112024_DAILY DOSE_ELEVATION.dwg</FileTitle>
        <svg width="6" height="10" viewBox="0 0 6 10"><path d="M0 0l6 5-6 5z" fill={INK} /></svg>
        <SearchBox aria-label="Search" placeholder="Type a keyword or phrase" />
        <Cell aria-label="Search"><Icon n="search" size={20} /></Cell>
        <LinkButton $w={131}><Icon n="person" size={20} />Sign In</LinkButton>
        <Cell $w={20} aria-label="Account"><Caret w={6} /></Cell>
        <Cell $w={32} aria-label="Store"><Icon n="cart" size={20} /></Cell>
        <Cell $w={27} aria-label="Apps"><Icon n="app" size={20} /></Cell>
        <Cell $w={14} aria-label="App list"><Caret w={6} /></Cell>
        <Rule />
        <Cell $w={26} aria-label="Help">
          <svg width="20" height="20" viewBox="0 0 20 20">
            <circle cx="10" cy="10" r="10" fill={INK} />
            <text x="10" y="15" textAnchor="middle" fontWeight="700" fontSize="14" fill="#222933">?</text>
          </svg>
        </Cell>
        <Cell $w={20} aria-label="Help list"><Caret w={6} /></Cell>
        <Controls w={58} gap="72px" />
      </TitleBar>
      <MenuBar>
        {menus.map((m) => <MenuItem key={m}>{m}</MenuItem>)}
        <Controls w={41} />
      </MenuBar>
      <TabStrip>
        <BurgerButton aria-label="Drawings"><Burger /></BurgerButton>
        <Slash />
        <Tab $w={52} $pad={10}>Start</Tab>
        <Slash />
        <Tab $w={80} $pad={9}>3D 05*</Tab>
        <Slash />
        <Tab $w={306} $pad={9}>20241202_MISHARY ... VILLA_ELEVATION*</Tab>
        <ActiveTab as="div" $w={312} $pad={21} $size={15}>
          28112024_DAILY DOSE_ELEVATION*
          <button aria-label="Close tab">
            <svg width="11" height="11" viewBox="0 0 11 11" stroke="#b5b8bd" strokeWidth="2.500"><path d="M1 1l9 9M10 1l-9 9" /></svg>
          </button>
        </ActiveTab>
        <Tab $w={296} $pad={10}>3D 28112024_DAILY DOSE_ELEVATION*</Tab>
        <Slash />
        <Cell $w={44} aria-label="New drawing"><Plus /></Cell>
        <Slash />
      </TabStrip>
      <Toolbars>
        <ToolRow>
          <Group>
            <Grip />
            <ToolButton name="layerProps" />
            <Combo $w={376} $pad={8}>
              <svg width="86" height="22" viewBox="0 0 86 22">
                <circle cx="7" cy="7" r="6.500" fill="#f9a80c" />
                <path d="M3 10h8l-1 4H4z" fill="#f9a80c" />
                <path d="M4 15h6v4H4z" fill="#666" />
                <g stroke="#f9a80c" strokeWidth="1.500">
                  <circle cx="28" cy="10" r="5" fill="#f9a80c" />
                  <path d="M28 1v18M19 10h18M22 4l12 12M34 4L22 16" />
                </g>
                <path d="M47 2h14v14H47z" fill="#ececec" stroke="#777" />
                <path d="M45 1h3M60 1h3M45 17h3" stroke="#555" strokeWidth="2" />
                <circle cx="60" cy="15" r="3.500" fill="#f9a80c" />
                <path d="M60 9v12M54 15h12M56 11l8 8M64 11l-8 8" stroke="#f9a80c" />
                <path d="M69 9h14v11H69z" fill="#f9a80c" />
                <path d="M79 9V5a3 3 0 0 1 6 0v3" fill="none" stroke="#f9a80c" strokeWidth="2" />
                <path d="M75 12h2v5h-2z" fill="#fff" />
              </svg>
              <Swatch />
              <PlainSelect aria-label="Layer"><option>A-Glaz</option></PlainSelect>
              <Chevron />
            </Combo>
            <ToolSet names={["makeCurrent", "layerPrev", "layerStates"]} />
          </Group>
          <Group>
            <Grip />
            <ToolSet names={dimTools} />
            <Combo $w={149} $pad={24} $h={28}>
              <PlainSelect aria-label="Dimension style"><option>HC-50-IN</option></PlainSelect>
              <Chevron />
            </Combo>
            <ToolButton name="dimStyle" />
          </Group>
          <Group>
            <Grip />
            <ToolSet names={["front", "back", "above", "under", "|", "textFront", "hatchBack"]} />
          </Group>
          <Group>
            <Grip />
            <ToolSet names={["layerMatch", "layerCheck", "layerDown", "layerUp", "layerUser", "layerWalk", "|", "freeze", "layerOff", "lock", "unlock"]} />
          </Group>
        </ToolRow>
        <ToolRow>
          <Group>
            <Grip />
            <ToolSet names={["refEdit", "|"]} />
            <StyleName aria-label="Reference name" />
            <ToolSet names={["|", "addSet", "removeSet", "discard", "saveRef"]} />
          </Group>
          <Group>
            <Grip />
            <Combo $w={190}>
              <Swatch />
              <PlainSelect aria-label="Color"><option>ByLayer</option></PlainSelect>
              <Chevron />
            </Combo>
            <Divider />
            <Combo $w={199}>
              <LineSample $w={76} />
              <PlainSelect aria-label="Linetype"><option>ByLayer</option></PlainSelect>
              <Chevron />
            </Combo>
            <Divider />
            <Combo $w={157}>
              <LineSample $w={46} />
              <PlainSelect aria-label="Lineweight"><option>ByLayer</option></PlainSelect>
              <Chevron />
            </Combo>
            <Divider />
            <Combo $w={149} $pad={12} $off>
              <PlainSelect aria-label="Plot style"><option>ByColor</option></PlainSelect>
              <Chevron c="#aaa" />
            </Combo>
          </Group>
          <Group>
            <Grip />
            <ToolSet names={["insertBlock", "|", "attach", "attachDwg", "attachDwf", "attachDgn", "attachPdf", "image", "|", "importFile", "|", "dataLink"]} />
          </Group>
          <Group>
            <Grip />
            <ToolSet names={["leader", "leaderAdd", "leaderRemove", "|", "leaderAlign", "leaderCollect", "|"]} />
            <Combo $w={149} $pad={24} $h={28}>
              <PlainSelect aria-label="Leader style"><option>Standard</option></PlainSelect>
              <Chevron />
            </Combo>
            <ToolButton name="leaderStyle" />
          </Group>
        </ToolRow>
      </Toolbars>
      <Viewport>
        <Model />
        <ViewLabel>[−][Top][2D Wireframe]</ViewLabel>
        <ViewCube />
      </Viewport>
      <CommandDock>
        <DockSide>
          <svg width="22" height="8" viewBox="0 0 22 8" stroke={INK} strokeWidth="2" strokeDasharray="2 2"><path d="M0 1h22M0 5h22" /></svg>
          <button aria-label="Close command line">
            <svg width="12" height="12" viewBox="0 0 12 12" stroke={INK} strokeWidth="2.500"><path d="M1 1l10 10M11 1L1 11" /></svg>
          </button>
          <button aria-label="Customize">
            <svg width="20" height="20" viewBox="0 0 20 20"><path d="M2 18L11 9" stroke={INK} strokeWidth="3.500" strokeLinecap="round" /><path d="M15 1a5 5 0 1 0 4 5l-4 2-3-3z" fill={INK} /></svg>
          </button>
        </DockSide>
        <DockMain>
          <History>
            <p>Specify base point or [Displacement] &lt;Displacement&gt;:</p>
            <p>Specify second point or &lt;use first point as displacement&gt;:</p>
          </History>
          <Prompt>
            <svg width="20" height="16" viewBox="0 0 20 16"><path d="M0.500 0.500h19v15h-19z" fill="#f4f4f4" stroke="#b0b0b0" /><path d="M0 0h20v4H0z" fill="#b0b0b0" /><path d="M3 7l3 2-3 2M8 12h5" fill="none" stroke="#999" /></svg>
            <Caret c="#9a9a9a" w={10} />
            <input aria-label="Command" placeholder="Type a command" />
          </Prompt>
        </DockMain>
        <Mark />
      </CommandDock>
      <StatusBar>
        <BurgerButton aria-label="Layouts"><Burger /></BurgerButton>
        <ActiveTab $w={86} $pad={21}>Model</ActiveTab>
        <Tab $w={70} $pad={8}>Layout1</Tab>
        <Slash />
        <Tab $w={72} $pad={10}>Layout2</Tab>
        <Slash />
        <Cell $w={42} aria-label="New layout"><Plus /></Cell>
        <Slash />
        <Push />
        <StatusGroup><StatusButton $w={59}>MODEL</StatusButton></StatusGroup>
        <StatusGroup>
          <StatusButton aria-label="Grid"><Icon n="grid" size={20} /></StatusButton>
          <StatusButton aria-label="Snap"><Icon n="snap" size={18} /></StatusButton>
          <StatusButton aria-label="Snap list" $w={20}><Caret w={9} /></StatusButton>
        </StatusGroup>
        <StatusGroup>
          <StatusButton aria-label="Ortho" $on><Icon n="ortho" size={22} /></StatusButton>
          <StatusButton aria-label="Polar"><Icon n="polar" size={21} /></StatusButton>
          <StatusButton aria-label="Polar list" $w={20}><Caret w={9} /></StatusButton>
          <StatusButton aria-label="Isodraft"><Icon n="iso" size={20} /></StatusButton>
          <StatusButton aria-label="Isodraft list" $w={20} $mr={2}><Caret w={9} /></StatusButton>
          <StatusButton aria-label="Tracking" $w={28} $on $mr={2}><Icon n="track" size={21} /></StatusButton>
          <StatusButton aria-label="Object snap" $w={28} $on><Icon n="osnap" size={21} /></StatusButton>
          <StatusButton aria-label="Object snap list" $w={21}><Caret w={9} /></StatusButton>
        </StatusGroup>
        <StatusGroup>
          <StatusButton aria-label="Annotations" $w={28} $on><Icon n="anno" size={21} /></StatusButton>
          <StatusButton aria-label="Auto scale"><Icon n="annoAuto" size={21} /></StatusButton>
          <StatusButton aria-label="Scale"><Icon n="annoScale" size={21} /></StatusButton>
          <StatusButton $w={67}>1:1000<Caret w={9} /></StatusButton>
        </StatusGroup>
        <StatusGroup>
          <StatusButton aria-label="Workspace"><Gear /></StatusButton>
          <StatusButton aria-label="Workspace list" $w={21}><Caret w={9} /></StatusButton>
        </StatusGroup>
        <StatusGroup><StatusButton aria-label="Monitor"><Plus /></StatusButton></StatusGroup>
        <StatusGroup><StatusButton aria-label="Isolate"><Icon n="isolate" size={21} /></StatusButton></StatusGroup>
        <StatusGroup><StatusButton aria-label="Hardware" $w={32}><Icon n="hardware" size={24} /></StatusButton></StatusGroup>
        <StatusGroup><StatusButton aria-label="Clean screen"><Icon n="clean" size={20} /></StatusButton></StatusGroup>
        <StatusGroup><StatusButton aria-label="Customization"><Burger /></StatusButton></StatusGroup>
      </StatusBar>
    </Shell>
  );
}
